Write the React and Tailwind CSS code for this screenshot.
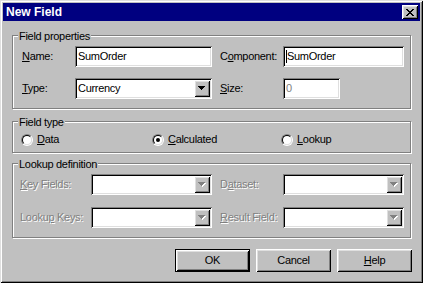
import React from "react";

const sunken = "shadow-[inset_1px_1px_0_#808080,inset_-1px_-1px_0_#fff,inset_2px_2px_0_#000,inset_-2px_-2px_0_#dfdfdf]";
const raised = "shadow-[inset_1px_1px_0_#fff,inset_-1px_-1px_0_#000,inset_2px_2px_0_#dfdfdf,inset_-2px_-2px_0_#808080]";
const dim = "text-[#808080] [text-shadow:1px_1px_0_#fff]";

function Arrow({ disabled }) {
  const fill = disabled ? "#808080" : "#000";
  return (
    <svg width="8" height="5" viewBox="0 0 8 5">
      {disabled && (
        <g fill="#fff">
          <rect x="1" y="1" width="7" height="1" />
          <rect x="2" y="2" width="5" height="1" />
          <rect x="3" y="3" width="3" height="1" />
          <rect x="4" y="4" width="1" height="1" />
        </g>
      )}
      <g fill={fill}>
        <rect x="0" y="0" width="7" height="1" />
        <rect x="1" y="1" width="5" height="1" />
        <rect x="2" y="2" width="3" height="1" />
        <rect x="3" y="3" width="1" height="1" />
      </g>
    </svg>
  );
}

function CloseGlyph() {
  // classic 8x7 pixel cross
  const rows = [
    [0, 1, 6, 7],
    [1, 2, 5, 6],
    [2, 3, 4, 5],
    [3, 4],
    [2, 3, 4, 5],
    [1, 2, 5, 6],
    [0, 1, 6, 7],
  ];
  return (
    <svg width="8" height="7" viewBox="0 0 8 7">
      {rows.map((cols, y) =>
        cols.map((x) => <rect key={`${x}-${y}`} x={x} y={y} width="1" height="1" fill="#000" />)
      )}
    </svg>
  );
}

function Group({ title, className, children }) {
  return (
    <div className={`relative border border-[#808080] shadow-[inset_1px_1px_0_#fff,1px_1px_0_#fff] ${className}`}>
      <span className="absolute left-[5px] top-[-6px] bg-[#c0c0c0] px-[1px] leading-[13px]">{title}</span>
      {children}
    </div>
  );
}

function Field({ className, children }) {
  return (
    <div className={`flex items-center h-[21px] bg-white p-[2px] pl-[3px] leading-[13px] ${sunken} ${className}`}>
      {children}
    </div>
  );
}

function Combo({ value, disabled, className }) {
  return (
    <div className={`flex h-[21px] bg-white p-[2px] ${sunken} ${className}`}>
      <div className="flex-1 pl-[1px] leading-[17px]">{value}</div>
      <div className={`w-[16px] flex items-center justify-center bg-[#c0c0c0] ${raised}`}>
        <Arrow disabled={disabled} />
      </div>
    </div>
  );
}

function Radio({ checked, label, ul, rest, className }) {
  return (
    <div className={`flex items-center gap-[4px] ${className}`}>
      <span className="w-[12px] h-[12px] rounded-full border border-t-[#808080] border-l-[#808080] border-r-white border-b-white">
        <span className="w-full h-full rounded-full border border-t-black border-l-black border-r-[#dfdfdf] border-b-[#dfdfdf] bg-white flex items-center justify-center">
          {checked && <span className="w-[4px] h-[4px] rounded-full bg-black" />}
        </span>
      </span>
      <span className="leading-[13px]">
        <u>{ul}</u>
        {rest}
      </span>
    </div>
  );
}

function Button({ children, isDefault }) {
  return (
    <button
      className={`w-[75px] h-[23px] bg-[#c0c0c0] text-black leading-[13px] ${raised} ${
        isDefault ? "outline outline-1 outline-black -outline-offset-1 shadow-[inset_2px_2px_0_#fff,inset_-2px_-2px_0_#000,inset_3px_3px_0_#dfdfdf,inset_-3px_-3px_0_#808080]" : ""
      }`}
    >
      {children}
    </button>
  );
}

export default function App() {
  return (
    <div className="w-[423px] h-[283px] bg-[#c0c0c0] p-[3px] text-[11px] tracking-[-0.3px] text-black font-['Liberation_Sans',Arial,sans-serif] shadow-[inset_1px_1px_0_#dfdfdf,inset_-1px_-1px_0_#000,inset_2px_2px_0_#fff,inset_-2px_-2px_0_#808080] flex flex-col">
      {/* title bar */}
      <div className="h-[18px] bg-[#000080] flex items-center justify-between pl-[3px] pr-[2px]">
        <span className="text-white font-bold text-[12px] tracking-normal">New Field</span>
        <div className={`w-[16px] h-[14px] bg-[#c0c0c0] flex items-center justify-center ${raised}`}>
          <CloseGlyph />
        </div>
      </div>

      <div className="flex flex-col px-[9px]">
        <Group title="Field properties" className="mt-[14px] h-[74px]">
          <div className="flex flex-col gap-[11px] pt-[10px] pl-[9px]">
            <div className="flex items-center h-[21px]">
              <span className="w-[53px]"><u>N</u>ame:</span>
              <Field className="w-[137px]">SumOrder</Field>
              <span className="ml-[8px] w-[63px]">C<u>o</u>mponent:</span>
              <Field className="w-[121px]">
                <span className="w-[1px] h-[13px] bg-black shrink-0" />
                SumOrder
              </Field>
            </div>
            <div className="flex items-center h-[21px]">
              <span className="w-[53px]"><u>T</u>ype:</span>
              <Combo value="Currency" className="w-[137px]" />
              <span className="ml-[8px] w-[63px]"><u>S</u>ize:</span>
              <Field className="w-[57px] text-[#808080]">0</Field>
            </div>
          </div>
        </Group>

        <Group title="Field type" className="mt-[12px] h-[32px]">
          <div className="flex items-center pt-[11px] pl-[8px]">
            <Radio ul="D" rest="ata" className="w-[131px]" />
            <Radio ul="C" rest="alculated" checked className="w-[129px]" />
            <Radio ul="L" rest="ookup" />
          </div>
        </Group>

        <Group title="Lookup definition" className="mt-[10px] h-[75px]">
          <div className="flex flex-col gap-[12px] pt-[10px] pl-[7px]">
            <div className="flex items-center h-[21px]">
              <span className={`w-[71px] ${dim}`}><u>K</u>ey Fields:</span>
              <Combo disabled className="w-[121px]" />
              <span className={`ml-[8px] w-[63px] ${dim}`}>D<u>a</u>taset:</span>
              <Combo disabled className="w-[121px]" />
            </div>
            <div className="flex items-center h-[21px]">
              <span className={`w-[71px] ${dim}`}>Looku<u>p</u> Keys:</span>
              <Combo disabled className="w-[121px]" />
              <span className={`ml-[8px] w-[63px] ${dim}`}><u>R</u>esult Field:</span>
              <Combo disabled className="w-[121px]" />
            </div>
          </div>
        </Group>

        <div className="mt-[11px] mr-[-1px] flex justify-end gap-[6px]">
          <Button isDefault>OK</Button>
          <Button>Cancel</Button>
          <Button>
            <u>H</u>elp
          </Button>
        </div>
      </div>
    </div>
  );
}
